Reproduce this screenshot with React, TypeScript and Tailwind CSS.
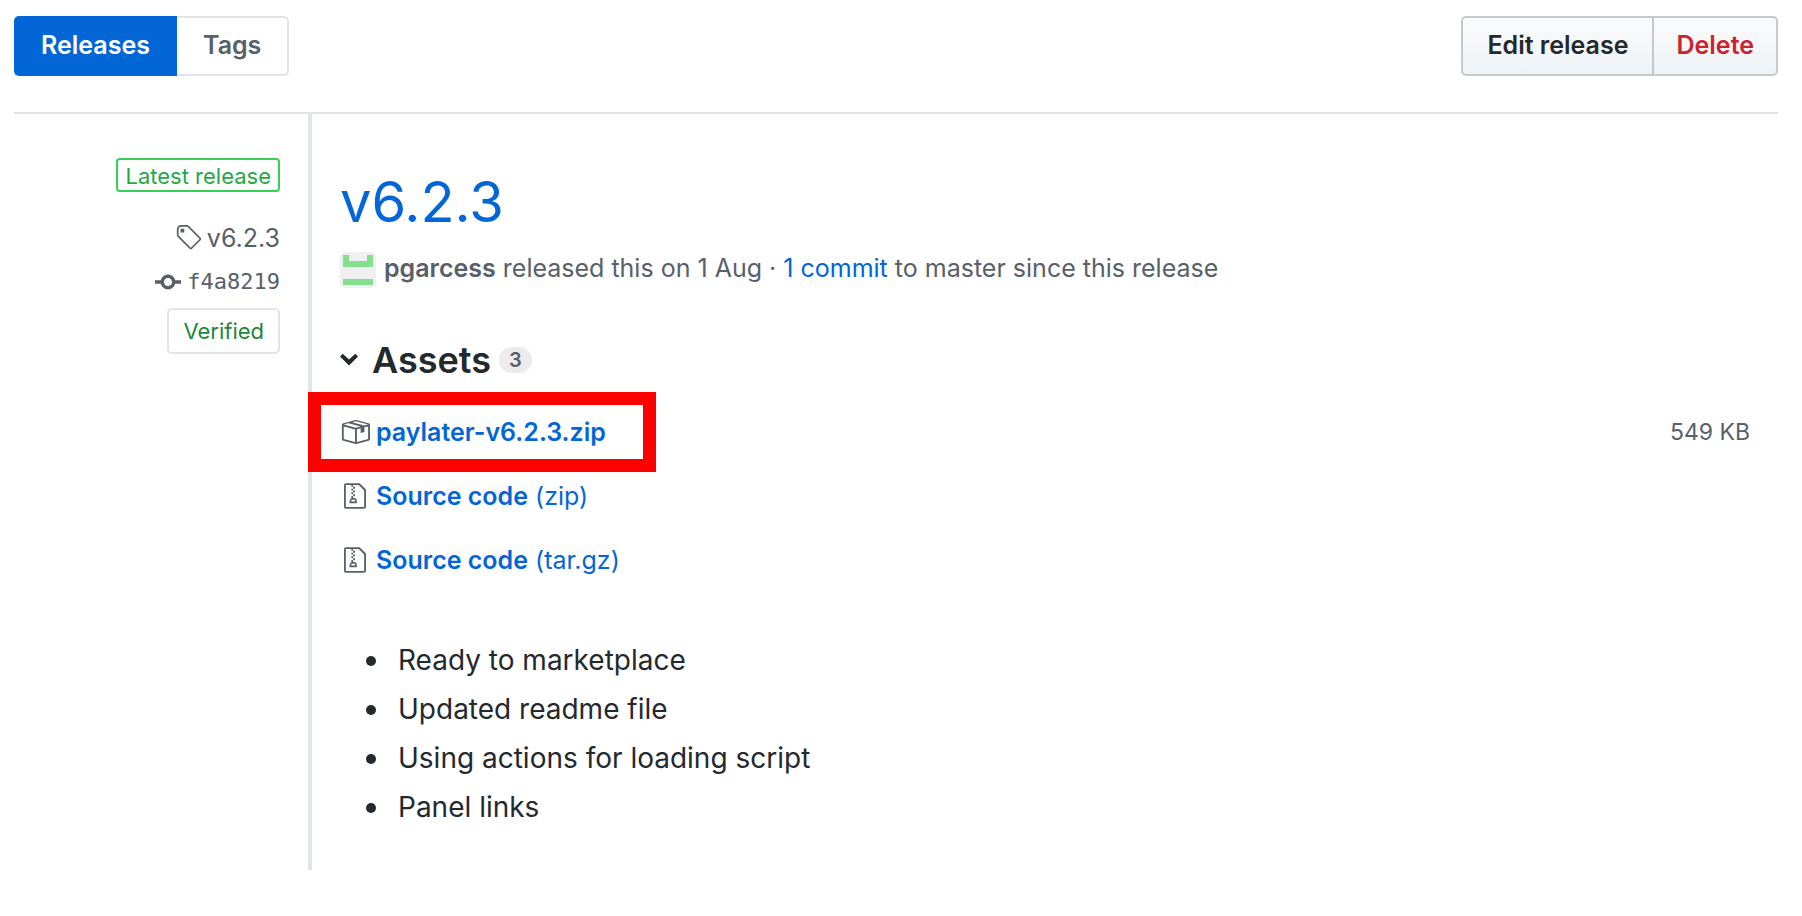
import React from "react";

type IconProps = { className: string; viewBox: string; d: string };

function Icon({ className, viewBox, d }: IconProps) {
  return (
    <svg className={className} viewBox={viewBox} fill="currentColor" fillRule="evenodd" aria-hidden="true">
      <path d={d} />
    </svg>
  );
}

const TAG =
  "M7.73 1.73C7.26 1.26 6.62 1 5.96 1H3.5C2.13 1 1 2.13 1 3.5v2.47c0 .66.27 1.3.73 1.77l6.06 6.06c.39.39 1.02.39 1.41 0l4.59-4.59a.996.996 0 000-1.41L7.73 1.73zM2.38 7.09c-.31-.3-.47-.7-.47-1.13V3.5c0-.88.72-1.59 1.59-1.59h2.47c.42 0 .83.16 1.13.47l6.14 6.13-4.73 4.73-6.13-6.15zM3.01 3h2v2H3V3h.01z";
const COMMIT =
  "M10.86 7c-.45-1.72-2-3-3.86-3-1.86 0-3.41 1.28-3.86 3H0v2h3.14c.45 1.72 2 3 3.86 3 1.86 0 3.41-1.28 3.86-3H14V7h-3.14zM7 10.2c-1.22 0-2.2-.98-2.2-2.2 0-1.22.98-2.2 2.2-2.2 1.22 0 2.2.98 2.2 2.2 0 1.22-.98 2.2-2.2 2.2z";
const PACKAGE =
  "M1 4.27v7.47c0 .45.3.84.75.97l6.5 1.73c.16.05.34.05.5 0l6.5-1.73c.45-.13.75-.52.75-.97V4.27c0-.45-.3-.84-.75-.97l-6.5-1.74a1.4 1.4 0 00-.5 0L1.75 3.3c-.45.13-.75.52-.75.97zm7 9.09l-6-1.59V5l6 1.61v6.75zM2 4l2.5-.67L11 5.06l-2.5.67L2 4zm13 7.77l-6 1.59V6.61l2-.55V8.5l2-.53V5.53L15 5v6.77zm-2-7.24L6.5 2.8l2-.53L15 4l-2 .53z";
const ZIP =
  "M8.5 1H1a1 1 0 00-1 1v12a1 1 0 001 1h10a1 1 0 001-1V4.5L8.5 1zM11 14H1V2h3v1h1V2h3l3 3v9zM5 4V3h1v1H5zM4 4h1v1H4V4zm1 2V5h1v1H5zM4 6h1v1H4V6zm1 2V7h1v1H5zM4 9.28A2 2 0 003 11v1h4v-1a2 2 0 00-2-2V8H4v1.28zM6 10v1H4v-1h2z";
const CHEVRON = "M5 11L0 6l1.5-1.5L5 7.75 8.5 4.5 10 6l-5 5z";

const sources = ["(zip)", "(tar.gz)"];
const notes = ["Ready to marketplace", "Updated readme file", "Using actions for loading script", "Panel links"];

export default function App() {
  return (
    <div className="bg-white pt-4 pr-6 pb-11 pl-3.5 font-['Inter',sans-serif] text-[25px] leading-8 text-[#24292e]">
      <header className="flex justify-between border-b-2 border-[#e1e4e8] pb-9">
        <nav className="flex h-15 font-semibold">
          <a href="#releases" className="flex items-center rounded-l-[5px] bg-[#0366d6] px-[27px] pb-0.5 text-white">
            Releases
          </a>
          <a href="#tags" className="flex items-center rounded-r-[5px] border-2 border-l-0 border-[#e1e4e8] px-[26px] pb-0.5 text-[#586069]">
            Tags
          </a>
        </nav>
        <div className="flex h-15 rounded-[5px] border-2 border-[#c6c9cc] bg-linear-to-b from-[#fafbfc] to-[#eff3f6] font-semibold">
          <button type="button" className="border-r-2 border-[#c6c9cc] px-6 pb-0.5">
            Edit release
          </button>
          <button type="button" className="px-[22px] pb-0.5 text-[#cb2431]">
            Delete
          </button>
        </div>
      </header>

      <div className="flex">
        <aside className="flex w-[294px] shrink-0 flex-col items-end pt-11 pr-7 text-[#586069]">
          <span className="flex h-[34px] items-center rounded-[4px] border-2 border-[#34d058] px-[7px] pt-0.5 text-[22px] text-[#28a745]">
            Latest release
          </span>
          <a href="#tag" className="mt-[26px] flex h-10 items-center gap-1.5">
            <Icon className="h-[30px] w-[26px]" viewBox="0 0 14 16" d={TAG} />
            v6.2.3
          </a>
          <a href="#commit" className="mt-1 flex h-10 items-center gap-1.5 font-['DejaVu_Sans_Mono',monospace] text-[22px]">
            <Icon className="h-[30px] w-[26px]" viewBox="0 0 14 16" d={COMMIT} />
            f4a8219
          </a>
          <button type="button" className="mt-1.5 h-[46px] rounded-[5px] border-2 border-[#e1e4e8] px-3.5 text-[22px] text-[#22863a]">
            Verified
          </button>
        </aside>

        <main className="min-w-0 grow border-l-4 border-[#e1e4e8] pt-13 pb-[38px] pl-7">
          <h1 className="text-[56px] leading-[72px] text-[#0366d6]">
            <a href="#release">v6.2.3</a>
          </h1>
          <p className="mt-3.5 flex items-start text-[#586069]">
            <svg className="mr-2 size-9 rounded-[5px]" viewBox="0 0 36 36" aria-hidden="true">
              <rect width="36" height="36" fill="#f0f0f0" />
              <path d="M3 3h6v6h18V3h6v12H3zM3 27h30v6H3z" fill="#84e08f" />
            </svg>
            <span>
              <a href="#author" className="font-semibold">pgarcess</a> released this on 1 Aug ·{" "}
              <a href="#compare" className="text-[#0366d6]">1 commit</a> to master since this release
            </span>
          </p>

          <details open>
            <summary className="mt-[50px] flex h-11 list-none items-center">
              <Icon className="mr-3.5 h-[30px] w-[18px]" viewBox="0 0 10 16" d={CHEVRON} />
              <h2 className="text-4xl font-semibold">Assets</h2>
              <span className="ml-2 rounded-full bg-[#ececed] px-2.5 text-xl leading-[26px] font-semibold text-[#586069]">3</span>
            </summary>
            <ul className="mt-[18px] text-[#0366d6]">
              <li className="relative flex h-16 items-center justify-between pr-7">
                <a href="#package" className="flex items-center font-semibold">
                  <Icon className="mr-1.5 size-[30px] shrink-0 text-[#586069]" viewBox="0 0 16 16" d={PACKAGE} />
                  paylater-v6.2.3.zip
                </a>
                <small className="text-[23px] text-[#586069]">549 KB</small>
                <span className="pointer-events-none absolute -inset-y-2 -left-8 w-[348px] border-[13px] border-[#ff0000]" />
              </li>
              {sources.map((kind) => (
                <li key={kind} className="flex h-16 items-center">
                  <a href="#source" className="flex items-center">
                    <Icon className="mr-2.5 ml-1 h-[30px] w-[22px] text-[#586069]" viewBox="0 0 12 16" d={ZIP} />
                    <span>
                      <strong className="font-semibold">Source code</strong> {kind}
                    </span>
                  </a>
                </li>
              ))}
            </ul>
          </details>

          <ul className="mt-11 pl-[26px] text-[28px] leading-[49px]">
            {notes.map((note) => (
              <li
                key={note}
                className="flex items-center before:mr-[22px] before:size-2.5 before:rounded-full before:bg-[#24292e] before:content-['']"
              >
                {note}
              </li>
            ))}
          </ul>
        </main>
      </div>
    </div>
  );
}
